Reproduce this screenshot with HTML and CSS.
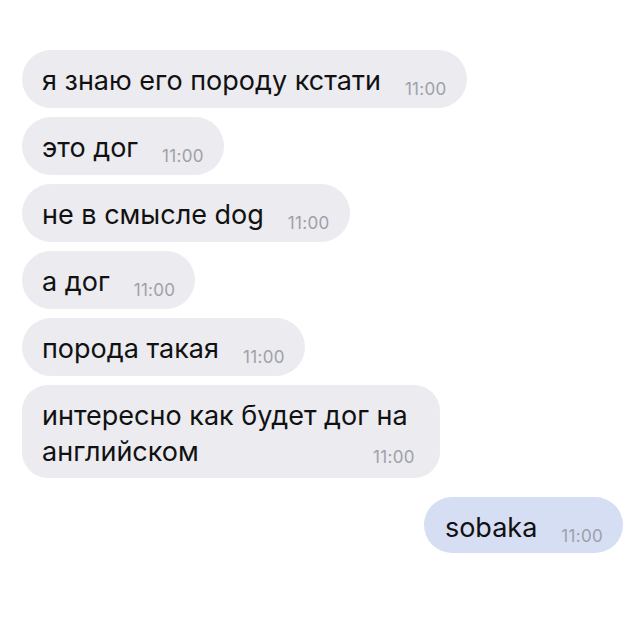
FILE: index.html
```html
<!DOCTYPE html>
<html lang="ru">
	<head>
		<meta charset="utf-8">
		<title>Чат</title>
		<link rel="stylesheet" href="styles.css">
	</head>
	<body>
		<div class="chat">
			<div class="msg">
				<span class="text">я знаю его породу кстати</span>
				<span class="time">11:00</span>
			</div>
			<div class="msg">
				<span class="text">это дог</span>
				<span class="time">11:00</span>
			</div>
			<div class="msg">
				<span class="text">не в смысле dog</span>
				<span class="time">11:00</span>
			</div>
			<div class="msg">
				<span class="text">а дог</span>
				<span class="time">11:00</span>
			</div>
			<div class="msg">
				<span class="text">порода такая</span>
				<span class="time">11:00</span>
			</div>
			<div class="msg msg-multi">
				<span class="text">интересно как будет дог на<br>английском</span>
				<span class="time">11:00</span>
			</div>
			<div class="msg msg-out">
				<span class="text">sobaka</span>
				<span class="time">11:00</span>
			</div>
		</div>
	</body>
</html>
```

FILE: styles.css
```css
* {
	box-sizing: border-box;
}
body {
	margin: 0;
	background: #fff;
	font-family: "Inter", "Liberation Sans", sans-serif;
}
.chat {
	display: flex;
	flex-direction: column;
	align-items: flex-start;
	gap: 9px;
	padding: 50px 17px 0 22px;
}
.msg {
	display: flex;
	align-items: flex-end;
	background: #ebebf0;
	border-radius: 29px;
	padding: 13px 20px 9px 20px;
	color: #111;
}
.text {
	font-size: 27px;
	line-height: 36px;
}
.time {
	font-size: 17px;
	line-height: 16px;
	letter-spacing: 0.3px;
	color: #a0a0a8;
	margin-left: 24px;
	margin-bottom: 2px;
}
.msg-multi {
	flex-direction: column;
	align-items: flex-start;
	border-radius: 26px;
	padding-right: 32px;
	padding-bottom: 8px;
}
.msg-multi .time {
	align-self: flex-end;
	margin-top: -21px;
	margin-right: -7px;
	margin-bottom: 5px;
}
.msg-out {
	align-self: flex-end;
	background: #d6def4;
	margin-top: 10px;
	padding-left: 21px;
	padding-bottom: 7px;
}
```
